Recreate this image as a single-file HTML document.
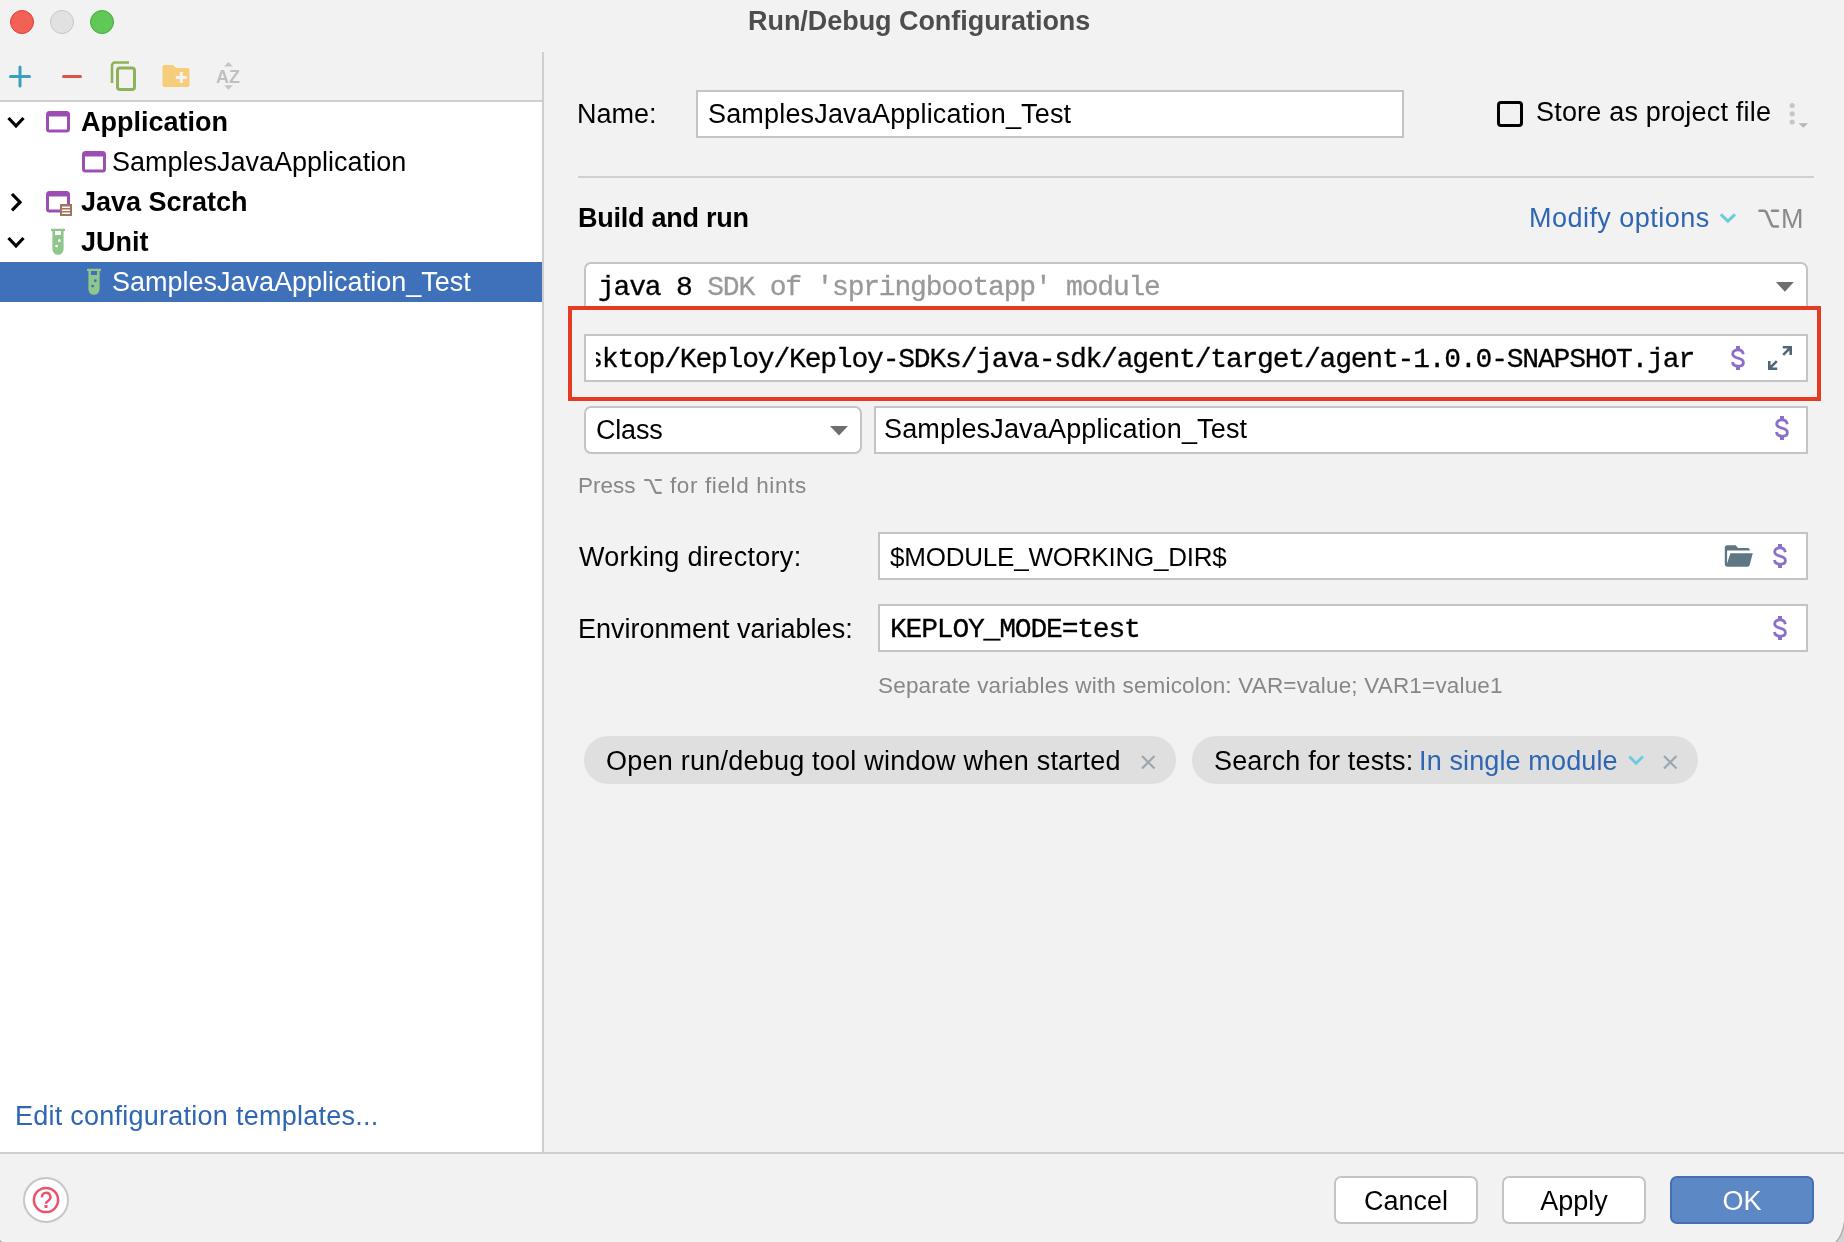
<!DOCTYPE html>
<html>
<head>
<meta charset="utf-8">
<title>Run/Debug Configurations</title>
<style>
*{box-sizing:border-box;margin:0;padding:0}
html,body{width:1844px;height:1242px;overflow:hidden;background:#f2f2f2}
body{will-change:transform;font-family:"Liberation Sans",sans-serif;font-size:27px;color:#000;position:relative}
.abs{position:absolute}
.t{position:absolute;white-space:nowrap;line-height:40px;height:40px}
.b{font-weight:bold}
.mono{font-family:"Liberation Mono",monospace;font-size:28px;letter-spacing:-1.2px;-webkit-text-stroke:0.3px currentColor}
.blue{color:#2f66b3}
.grey{color:#878787}
.inp{position:absolute;background:#fff;border:2px solid #c4c4c4}
.combo{position:absolute;background:#fff;border:2px solid #c4c4c4;border-radius:7px}
.hl{position:absolute;height:2px;background:#d1d1d1}
.chip{position:absolute;background:#dfdfdf;border-radius:24px;height:48px}
.btn{position:absolute;top:1176px;width:144px;height:48px;border:2px solid #c4c4c4;border-radius:7px;background:#fff;text-align:center;line-height:46px;font-size:27px}
</style>
</head>
<body>
<svg width="0" height="0" style="position:absolute"><defs>
<g id="dollar"><rect x="5" y="0" width="4" height="4.500" fill="#8d6fc9"/><rect x="5" y="19.500" width="4" height="4.500" fill="#8d6fc9"/>
<path d="M12.300 8.200C11.800 5.300 9.700 3.900 7 3.900C4 3.900 1.700 5.400 1.700 8C1.700 10.500 3.600 11.300 7 12.100C10.500 13 12.400 13.900 12.400 16.400C12.400 18.900 10 20.200 7 20.200C4 20.200 1.900 18.900 1.400 16" fill="none" stroke="#8d6fc9" stroke-width="2.800"/></g>
</defs></svg>
<!-- title bar -->
<div class="abs" style="left:10px;top:10px;width:24px;height:24px;border-radius:50%;background:#f26056;border:1px solid #dc4339"></div>
<div class="abs" style="left:50px;top:10px;width:24px;height:24px;border-radius:50%;background:#e1e1e1;border:1px solid #c7c7c7"></div>
<div class="abs" style="left:90px;top:10px;width:24px;height:24px;border-radius:50%;background:#60c856;border:1px solid #42ad36"></div>
<div class="t b" id="title" style="left:748px;top:1px;font-size:27px;letter-spacing:-0.05px;color:#4d4d4d">Run/Debug Configurations</div>

<!-- left panel -->
<div class="abs" style="left:0;top:102px;width:542px;height:1050px;background:#fff"></div>
<div class="abs" style="left:0;top:100px;width:542px;height:2px;background:#cfcfcf"></div>
<div class="abs" style="left:542px;top:52px;width:2px;height:1100px;background:#cfcfcf"></div>
<div class="abs" style="left:0;top:1152px;width:1844px;height:2px;background:#cfcfcf"></div>

<!-- TOOLBAR-ICONS -->
<svg class="abs" style="left:0;top:52px" width="260" height="48" viewBox="0 52 260 48">
  <!-- plus -->
  <path d="M20 67v19M10.5 76.5h19" stroke="#3d9fbe" stroke-width="3" stroke-linecap="round" fill="none"/>
  <!-- minus -->
  <path d="M63.5 76.5h17" stroke="#db524b" stroke-width="3" stroke-linecap="round" fill="none"/>
  <!-- copy -->
  <path d="M112 83V65.5a3 3 0 0 1 3-3H129" stroke="#8eb356" stroke-width="2.6" stroke-linecap="butt" fill="none"/>
  <rect x="117.5" y="68" width="17" height="21.5" rx="2.5" stroke="#8eb356" stroke-width="3" fill="none"/>
  <!-- folder plus -->
  <path d="M164.5 65h8.500l3 3h11.500a2 2 0 0 1 2 2v15a2 2 0 0 1 -2 2h-23a2 2 0 0 1 -2-2v-18a2 2 0 0 1 2-2z" fill="#f6cd7a"/>
  <path d="M181.300 72v11M175.800 77.500h11" stroke="#f2f2f2" stroke-width="3" fill="none"/>
  <!-- AZ sort -->
  <path d="M228.500 62l4.300 4.500h-8.600z" fill="#c4c4c4"/>
  <path d="M228.500 89.800l4.300-4.600h-8.600z" fill="#c4c4c4"/>
  <text x="216" y="83" font-family="Liberation Sans, sans-serif" font-weight="bold" font-size="18.500" fill="#c0c0c0" textLength="24" lengthAdjust="spacingAndGlyphs">AZ</text>
</svg>

<!-- TREE -->
<div class="abs" style="left:0;top:262px;width:542px;height:40px;background:#3e71b9"></div>
<svg class="abs" style="left:0;top:102px" width="542" height="200" viewBox="0 102 542 200">
  <defs>
    <g id="app">
      <rect x="1.500" y="1.500" width="21" height="18.500" rx="2" fill="none" stroke="#9c4eb5" stroke-width="3"/>
      <rect x="1" y="1" width="22" height="4.500" fill="#9c4eb5"/>
    </g>
    <g id="tube">
      <path d="M0 0h14v2.300h-1.400v18.200a5.600 5.600 0 0 1 -11.200 0v-18.200h-1.400z" fill="#90c68b"/>
    </g>
  </defs>
  <!-- chevrons -->
  <path d="M8.500 118l7.500 8 7.500-8" stroke="#000" stroke-width="3.200" fill="none" stroke-linejoin="miter"/>
  <path d="M12 194l8 8.200-8 8.200" stroke="#000" stroke-width="3.200" fill="none"/>
  <path d="M8.500 238l7.500 8 7.500-8" stroke="#000" stroke-width="3.200" fill="none"/>
  <use href="#app" x="46" y="111"/>
  <use href="#app" x="82" y="151"/>
  <use href="#app" x="46" y="191"/>
  <!-- scratch badge -->
  <rect x="60" y="204" width="12" height="12" fill="#a1745f"/>
  <path d="M62 207.200h8M62 210.200h8M62 213.200h8" stroke="#fff" stroke-width="1.400"/>
  <!-- junit -->
  <use href="#tube" x="51" y="228.700"/>
  <rect x="55" y="231" width="6" height="4" fill="#fff"/>
  <circle cx="59.300" cy="240.700" r="1.400" fill="#fff"/>
  <circle cx="56.600" cy="246.100" r="1.400" fill="#fff"/>
  <use href="#tube" x="87" y="268.700"/>
  <rect x="91" y="271" width="6" height="4" fill="#3e71b9"/>
  <circle cx="95.300" cy="280.700" r="1.400" fill="#3e71b9"/>
  <circle cx="92.600" cy="286.100" r="1.400" fill="#3e71b9"/>
</svg>
<div class="t b" id="t1" style="left:81px;top:102px">Application</div>
<div class="t" id="t2" style="left:112px;top:142px">SamplesJavaApplication</div>
<div class="t b" id="t3" style="left:81px;top:182px">Java Scratch</div>
<div class="t b" id="t4" style="left:81px;top:222px">JUnit</div>
<div class="t" id="t5" style="left:112px;top:262px;color:#fff">SamplesJavaApplication_Test</div>
<div class="t blue" id="t6" style="left:15px;top:1096px;letter-spacing:0.25px">Edit configuration templates...</div>

<!-- RIGHT -->
<div class="t" id="r_name" style="left:577px;top:94px">Name:</div>
<div class="inp" style="left:696px;top:90px;width:708px;height:48px"></div>
<div class="t" id="r_nameval" style="left:708px;top:94px;letter-spacing:0.17px">SamplesJavaApplication_Test</div>
<div class="abs" style="left:1497px;top:101px;width:26px;height:26px;border:3px solid #000;border-radius:4px;background:#f2f2f2"></div>
<div class="t" id="r_store" style="left:1536px;top:92px;letter-spacing:0.19px">Store as project file</div>
<svg class="abs" style="left:1786px;top:100px" width="26" height="32" viewBox="1786 100 26 32">
  <circle cx="1792.200" cy="105.600" r="2.600" fill="#c6c6c6"/>
  <circle cx="1792.200" cy="113.800" r="2.600" fill="#c6c6c6"/>
  <circle cx="1792.200" cy="122" r="2.600" fill="#c6c6c6"/>
  <path d="M1798.600 123.300h9.400l-4.700 4.500z" fill="#b5b5b5"/>
</svg>
<div class="hl" style="left:578px;top:176px;width:1236px"></div>
<div class="t b" id="r_build" style="left:578px;top:198px;letter-spacing:-0.25px">Build and run</div>
<div class="t blue" id="r_modify" style="left:1529px;top:198px;letter-spacing:0.47px">Modify options</div>
<svg class="abs" style="left:1716px;top:205px" width="70" height="28" viewBox="1716 205 70 28">
  <path d="M1720.800 214.300l7.100 6.900 7.100-6.900" stroke="#6ccbdf" stroke-width="3" fill="none"/>
  <path d="M1759.500 210.700h4.500q1.500 0 2.200 1.400l5.500 13q0.600 1.400 2.200 1.400h4M1772 210.700h6" stroke="#8a8a8a" stroke-width="2.600" stroke-linecap="round" fill="none"/>
</svg>
<div class="t grey" id="r_M" style="left:1781px;top:199px;color:#8a8a8a">M</div>

<!-- sdk combo -->
<div class="combo" style="left:584px;top:262px;width:1224px;height:52px"></div>
<div class="t mono" id="r_java" style="left:598px;top:268px">java 8 <span style="color:#999">SDK of 'springbootapp' module</span></div>
<svg class="abs" style="left:1774px;top:280px" width="22" height="14" viewBox="1774 280 22 14"><path d="M1776 282h17.800l-8.900 9.800z" fill="#6e6e6e"/></svg>

<!-- red highlight -->
<div class="abs" style="left:568px;top:306px;width:1253px;height:95px;border:4px solid #e63b23;background:#f2f2f2"></div>
<div class="inp" style="left:584px;top:334px;width:1224px;height:48px"></div>
<div class="abs mono" id="r_pathbox" style="left:596px;top:340px;width:1098px;height:40px;overflow:hidden;line-height:40px;white-space:nowrap;display:flex;justify-content:flex-end"><span id="r_path">/Desktop/Keploy/Keploy-SDKs/java-sdk/agent/target/agent-1.0.0-SNAPSHOT.jar</span></div>
<svg class="abs" style="left:1731px;top:346px" width="14" height="24" viewBox="0 0 14 24"><use href="#dollar"/></svg>
<svg class="abs" style="left:1766px;top:344px" width="28" height="28" viewBox="1766 344 28 28">
  <path d="M1782.800 347.300h7.900v7.800M1790.200 347.800l-7 7" stroke="#526675" stroke-width="2.600" fill="none"/>
  <path d="M1777.200 368.700h-7.900v-7.800M1769.800 368.200l7-7" stroke="#526675" stroke-width="2.600" fill="none"/>
</svg>

<!-- class row -->
<div class="combo" style="left:584px;top:406px;width:278px;height:48px"></div>
<div class="t" id="r_class" style="left:596px;top:410px;letter-spacing:-0.2px">Class</div>
<svg class="abs" style="left:828px;top:424px" width="22" height="14" viewBox="828 424 22 14"><path d="M830 426h18l-9 9.600z" fill="#6e6e6e"/></svg>
<div class="inp" style="left:874px;top:406px;width:934px;height:48px"></div>
<div class="t" id="r_classval" style="left:884px;top:409px;letter-spacing:0.17px">SamplesJavaApplication_Test</div>
<svg class="abs" style="left:1775px;top:416px" width="14" height="24" viewBox="0 0 14 24"><use href="#dollar"/></svg>

<div class="t grey" id="r_press1" style="left:578px;top:466px;font-size:22.5px">Press</div><div class="t grey" id="r_press2" style="left:670px;top:466px;font-size:22.5px;letter-spacing:0.62px">for field hints</div>
<svg class="abs" style="left:640px;top:474px" width="26" height="24" viewBox="640 474 26 24">
  <path d="M645 480h3.800q1.200 0 1.800 1.200l4.600 10.500q0.500 1.200 1.800 1.200h3.800M655.800 480h5.200" stroke="#8c8c8c" stroke-width="2.200" stroke-linecap="round" fill="none"/>
</svg>

<!-- working dir -->
<div class="t" id="r_wd" style="left:579px;top:537px;letter-spacing:0.3px">Working directory:</div>
<div class="inp" style="left:878px;top:532px;width:930px;height:48px"></div>
<div class="t" id="r_wdval" style="left:890px;top:537px;font-size:26px;letter-spacing:-0.22px">$MODULE_WORKING_DIR$</div>
<svg class="abs" style="left:1722px;top:542px" width="32" height="28" viewBox="1722 542 32 28">
  <path d="M1724.800 564.500V547.700a2.500 2.500 0 0 1 2.500-2.500h8.300l2.500 2.700h9.500a2.300 2.300 0 0 1 2.300 2.300v0.400H1727.100V564.500z" fill="#607685"/>
  <path d="M1730.400 553.300H1752.800L1749.700 565A2.400 2.400 0 0 1 1747.400 566.700H1727.200A2.400 2.400 0 0 1 1724.800 564.300L1727.100 563.400z" fill="#607685"/>
</svg>
<svg class="abs" style="left:1773px;top:544px" width="14" height="24" viewBox="0 0 14 24"><use href="#dollar"/></svg>

<!-- env -->
<div class="t" id="r_env" style="left:578px;top:609px">Environment variables:</div>
<div class="inp" style="left:878px;top:604px;width:930px;height:48px"></div>
<div class="t mono" id="r_envval" style="left:890px;top:610px">KEPLOY_MODE=test</div>
<svg class="abs" style="left:1773px;top:616px" width="14" height="24" viewBox="0 0 14 24"><use href="#dollar"/></svg>
<div class="t grey" id="r_sep" style="left:878px;top:666px;font-size:22.5px;letter-spacing:0.18px">Separate variables with semicolon: VAR=value; VAR1=value1</div>

<!-- chips -->
<div class="chip" style="left:584px;top:736px;width:592px"></div>
<div class="t" id="r_chip1" style="left:606px;top:741px;letter-spacing:0.23px">Open run/debug tool window when started</div>
<div class="chip" style="left:1192px;top:736px;width:506px"></div>
<div class="t" id="r_chip2a" style="left:1214px;top:741px;letter-spacing:0.16px">Search for tests:</div>
<div class="t blue" id="r_chip2b" style="left:1419px;top:741px;letter-spacing:0.13px">In single module</div>
<svg class="abs" style="left:1136px;top:750px" width="560" height="24" viewBox="1136 750 560 24">
  <path d="M1142 756l12.500 12.500M1154.500 756l-12.500 12.500" stroke="#9ba8b1" stroke-width="2.200" fill="none"/>
  <path d="M1664 756l12.500 12.500M1676.500 756l-12.500 12.500" stroke="#9ba8b1" stroke-width="2.200" fill="none"/>
  <path d="M1629.300 756.500l6.800 6.700 6.800-6.700" stroke="#6ccbdf" stroke-width="3" fill="none"/>
</svg>

<!-- BOTTOM -->
<svg class="abs" style="left:1824px;top:1216px" width="20" height="26" viewBox="1824 1216 20 26"><path d="M1844.500 1221Q1843 1235 1835.500 1242.500H1845z" fill="#d2d2d2" stroke="#aaaaaa" stroke-width="1.200"/></svg>
<svg class="abs" style="left:0;top:1236px" width="6" height="6" viewBox="0 0 6 6"><path d="M0 3.500Q0.500 5.500 2.500 6H0z" fill="#9a9a9a"/></svg>
<div class="abs" style="left:23px;top:1177px;width:46px;height:46px;border-radius:50%;background:#fff;border:2px solid #c6c6c6"></div>
<svg class="abs" style="left:30px;top:1184px" width="32" height="32" viewBox="0 0 32 32">
  <circle cx="16" cy="16" r="12.100" fill="none" stroke="#e9546c" stroke-width="2.500"/>
  <path d="M12 13.300a4.200 4.200 0 1 1 6.500 3.200q-2.500 1.600-2.500 3.200" fill="none" stroke="#e9546c" stroke-width="2.400"/>
  <rect x="14.500" y="20.900" width="3" height="3" rx="0.600" fill="#e9546c"/>
</svg>
<div class="btn" style="left:1334px"><span id="b_cancel">Cancel</span></div>
<div class="btn" style="left:1502px"><span id="b_apply">Apply</span></div>
<div class="btn" id="b_ok" style="left:1670px;background:#5c89c6;border-color:#4470af;color:#fff"><span id="b_ok">OK</span></div>
</body>
</html>
